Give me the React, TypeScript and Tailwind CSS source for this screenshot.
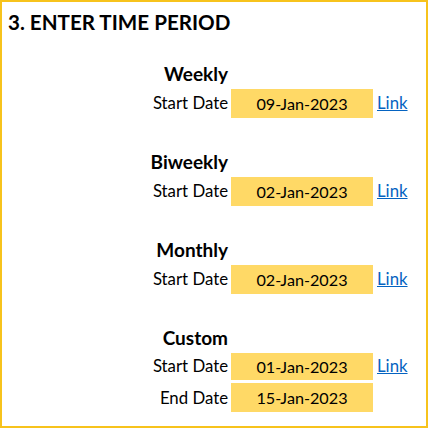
import React from 'react';

type Row = { label: string; date: string; link?: boolean };

const sections: { title: string; rows: Row[] }[] = [
    { title: 'Weekly', rows: [{ label: 'Start Date', date: '09-Jan-2023', link: true }] },
    { title: 'Biweekly', rows: [{ label: 'Start Date', date: '02-Jan-2023', link: true }] },
    { title: 'Monthly', rows: [{ label: 'Start Date', date: '02-Jan-2023', link: true }] },
    {
        title: 'Custom',
        rows: [
            { label: 'Start Date', date: '01-Jan-2023', link: true },
            { label: 'End Date', date: '15-Jan-2023' },
        ],
    },
];

const DateRow: React.FC<{ row: Row; tight?: boolean }> = ({ row, tight }) => {
    return (
        <div className={`grid grid-cols-[227px_142px_auto] gap-x-[2px] items-center ${tight ? 'h-[28px] mb-[3px]' : 'h-[29px]'}`}>
            <div className="text-right text-[16.8px] leading-[1.2] pr-[1px]">{row.label}</div>
            <div className="h-full bg-[#ffd966] flex items-center justify-center text-[16.2px] leading-[1.2]">
                {row.date}
            </div>
            {row.link ? (
                <a href="#" className="ml-[2px] text-[16.8px] leading-[1.2] text-[#0563c1] underline">
                    Link
                </a>
            ) : (
                <span />
            )}
        </div>
    );
};

export default function App() {
    return (
        <div
            className="w-[428px] h-[428px] border-2 border-[#f7c31c] bg-white text-black"
            style={{ fontFamily: 'Lato, "Liberation Sans", sans-serif' }}
        >
            <div className="h-[58px] pt-[8px] pl-[6px]">
                <h1 className="text-[20.6px] leading-[1.2] font-bold">3. ENTER TIME PERIOD</h1>
            </div>
            {sections.map((s) => (
                <div key={s.title} className="h-[88px] flex flex-col">
                    <div className="h-[29px] pt-[3px] pr-[1px] w-[227px] text-right">
                        <span className="text-[19px] leading-[1.2] font-bold">{s.title}</span>
                    </div>
                    {s.rows.map((r, i) => (
                        <DateRow key={r.label} row={r} tight={s.rows.length > 1 && i === 0} />
                    ))}
                </div>
            ))}
        </div>
    );
}
